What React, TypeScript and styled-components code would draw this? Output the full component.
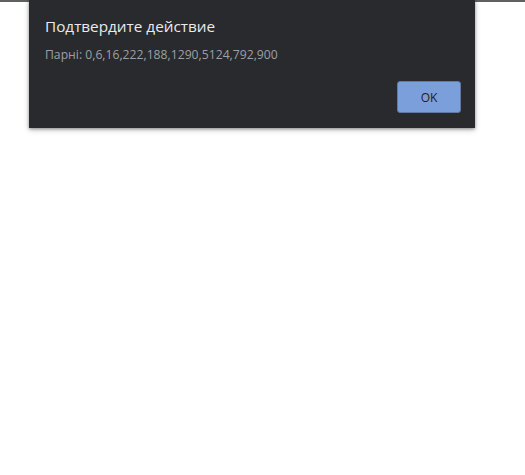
import React from "react";
import styled, { createGlobalStyle } from "styled-components";

const Global = createGlobalStyle`
  html, body { margin: 0; padding: 0; background: #ffffff; }
  body { font-family: "Open Sans", "Noto Sans", sans-serif; }
`;

const Page = styled.div`
  position: relative;
  width: 525px;
  height: 475px;
  background: #ffffff;
`;

const TopStrip = styled.div`
  height: 2px;
  background: #5f6061;
`;

const Dialog = styled.div`
  position: absolute;
  top: 0;
  left: 29px;
  width: 446px;
  box-sizing: border-box;
  padding: 16px 14px 15px 16px;
  background: #292a2d;
  box-shadow: 0 1px 3px rgba(0, 0, 0, 0.35), 0 2px 6px rgba(0, 0, 0, 0.2);
  display: flex;
  flex-direction: column;
`;

const Title = styled.div`
  color: #e8eaed;
  font-size: 15.3px;
  line-height: 20px;
`;

const Message = styled.div`
  margin-top: 10px;
  color: #9aa0a6;
  font-size: 12.2px;
  line-height: 18px;
`;

const Actions = styled.div`
  display: flex;
  justify-content: flex-end;
  margin-top: 17px;
`;

const Button = styled.button`
  width: 64px;
  height: 32px;
  border: 1px solid #5f7aa6;
  border-radius: 3px;
  background: #7b9fdb;
  color: #202124;
  font-family: "Open Sans", "Noto Sans", sans-serif;
  font-size: 12px;
  padding: 0;
  cursor: pointer;
`;

export default function App() {
  return (
    <Page>
      <Global />
      <TopStrip />
      <Dialog>
        <Title>Подтвердите действие</Title>
        <Message>Парні: 0,6,16,222,188,1290,5124,792,900</Message>
        <Actions>
          <Button>OK</Button>
        </Actions>
      </Dialog>
    </Page>
  );
}
